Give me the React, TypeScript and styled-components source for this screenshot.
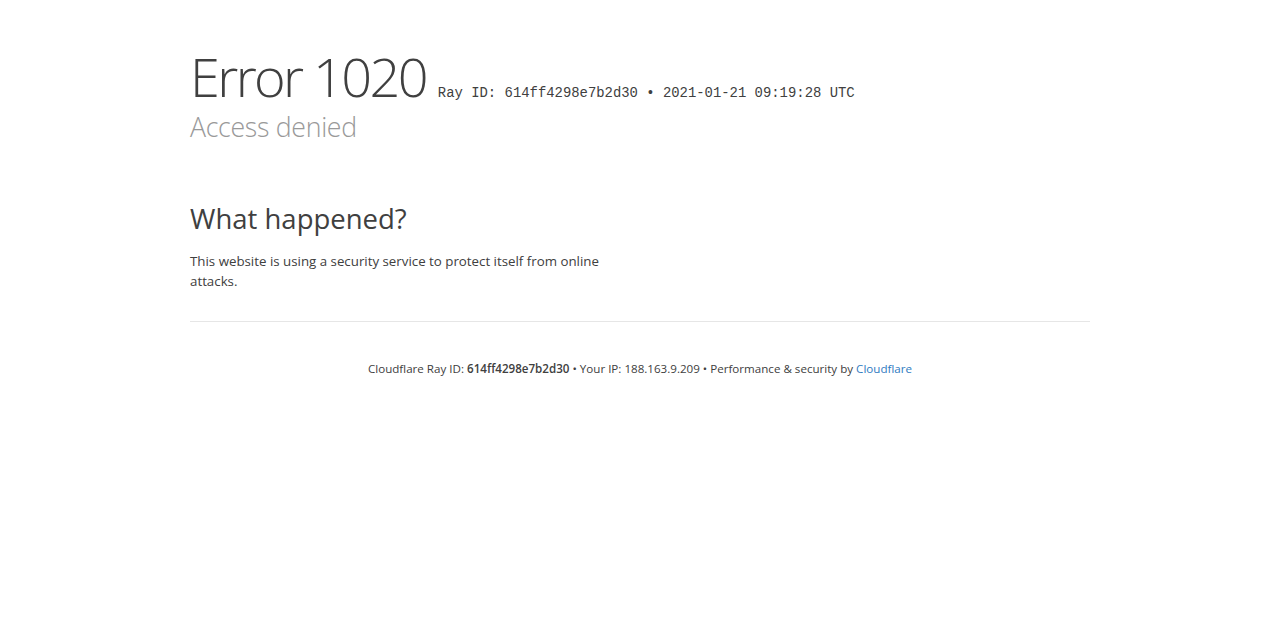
import React from "react";
import styled, { createGlobalStyle } from "styled-components";

const Global = createGlobalStyle`
  html, body { margin: 0; padding: 0; background: #fff; }
  body { font-family: "Open Sans", "Noto Sans", sans-serif; color: #404040; }
`;

const Page = styled.div`
  width: 900px;
  margin: 0 auto;
  padding-top: 46px;
`;

const Header = styled.header`
  display: flex;
  flex-direction: column;
`;

const TitleRow = styled.div`
  display: flex;
  align-items: baseline;
  gap: 12px;
`;

const Title = styled.h1`
  margin: 0;
  font-weight: 300;
  font-size: 54px;
  line-height: 60px;
  color: #404040;
  letter-spacing: -2.6px;
`;

const RayInfo = styled.span`
  font-family: "Liberation Mono", "Courier New", monospace;
  font-size: 13.9px;
  color: #404040;
`;

const Subtitle = styled.h2`
  margin: 4px 0 0;
  font-weight: 300;
  font-size: 26.7px;
  line-height: 34px;
  color: #999;
  letter-spacing: -0.3px;
`;

const Section = styled.section`
  padding-top: 57px;
  width: 450px;
`;

const SectionTitle = styled.h2`
  margin: 0 0 14px;
  font-weight: 400;
  font-size: 27.5px;
  line-height: 36px;
  color: #404040;
`;

const Body = styled.p`
  margin: 0;
  font-size: 13.3px;
  line-height: 20px;
  color: #404040;
`;

const Footer = styled.footer`
  margin-top: 30px;
  border-top: 1px solid #e6e6e6;
  padding-top: 38px;
  text-align: center;
  font-size: 11.6px;
  line-height: 18px;
  color: #404040;
`;

const Strong = styled.strong`
  font-weight: 600;
`;

const Link = styled.a`
  color: #2f7bbf;
  text-decoration: none;
`;

export default function App() {
  return (
    <>
      <Global />
      <Page>
        <Header>
          <TitleRow>
            <Title>Error 1020</Title>
            <RayInfo>Ray ID: 614ff4298e7b2d30 • 2021-01-21 09:19:28 UTC</RayInfo>
          </TitleRow>
          <Subtitle>Access denied</Subtitle>
        </Header>
        <Section>
          <SectionTitle>What happened?</SectionTitle>
          <Body>This website is using a security service to protect itself from online attacks.</Body>
        </Section>
        <Footer>
          Cloudflare Ray ID: <Strong>614ff4298e7b2d30</Strong> • Your IP: 188.163.9.209 • Performance &amp; security by{" "}
          <Link href="#">Cloudflare</Link>
        </Footer>
      </Page>
    </>
  );
}
